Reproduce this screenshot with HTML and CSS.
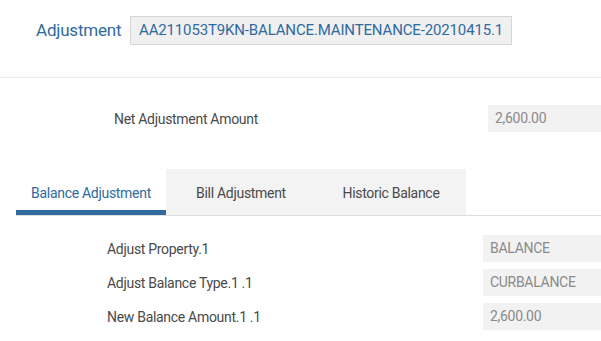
FILE: index.html
```html
<!DOCTYPE html>
<html lang="en">

<head>
    <meta charset="UTF-8">
    <meta name="viewport" content="width=device-width, initial-scale=1.0">
    <title>Adjustment</title>
    <link rel="stylesheet" href="styles.css">
</head>

<body>
    <div class="header">
        <span class="header-label">Adjustment</span>
        <span class="header-id">AA211053T9KN-BALANCE.MAINTENANCE-20210415.1</span>
    </div>

    <div class="net-row">
        <span class="net-label">Net Adjustment Amount</span>
        <span class="value-box net-value">2,600.00</span>
    </div>

    <div class="tabs">
        <div class="tab active">Balance Adjustment</div>
        <div class="tab">Bill Adjustment</div>
        <div class="tab">Historic Balance</div>
    </div>

    <div class="fields">
        <div class="field-row">
            <span class="field-label">Adjust Property.1</span>
            <span class="value-box">BALANCE</span>
        </div>
        <div class="field-row">
            <span class="field-label">Adjust Balance Type.1 .1</span>
            <span class="value-box">CURBALANCE</span>
        </div>
        <div class="field-row">
            <span class="field-label">New Balance Amount.1 .1</span>
            <span class="value-box">2,600.00</span>
        </div>
    </div>
</body>

</html>
```

FILE: styles.css
```css
body {
    font-family: Roboto, "Liberation Sans", sans-serif;
    margin: 0;
    background: #fff;
    color: #555;
    letter-spacing: -0.3px;
    overflow: hidden;
}

.header {
    display: flex;
    align-items: flex-start;
    height: 78px;
    padding: 16px 0 0 36px;
    box-sizing: border-box;
    border-bottom: 1px solid #ececec;
}

.header-label {
    font-size: 17px;
    line-height: 29px;
    letter-spacing: -0.2px;
    color: #2f6aa0;
    width: 94px;
}

.header-id {
    font-size: 15px;
    letter-spacing: -0.15px;
    color: #2f6aa0;
    background-color: #f0f0f0;
    border: 1px solid #d6d6d6;
    height: 29px;
    line-height: 27px;
    box-sizing: border-box;
    padding: 0 8px;
}

.net-row {
    display: flex;
    align-items: center;
    margin-top: 27px;
    padding-left: 114px;
}

.net-label {
    font-size: 14px;
    width: 374px;
    color: #4a4a4a;
}

.value-box {
    display: block;
    flex: 1;
    height: 27px;
    line-height: 27px;
    font-size: 14px;
    color: #8a8a8a;
    background-color: #f2f2f2;
    padding-left: 7px;
}

.tabs {
    display: flex;
    margin: 37px 0 0 16px;
    border-bottom: 1px solid #ddd;
}

.tab {
    width: 150px;
    height: 46px;
    box-sizing: border-box;
    padding-top: 16px;
    line-height: 16px;
    font-size: 14px;
    text-align: center;
    color: #4a4a4a;
    background-color: #f3f3f3;
}

.tab.active {
    background-color: #fff;
    color: #2f6aa0;
    border-bottom: 5px solid #2f6aa0;
}

.fields {
    padding-top: 19px;
}

.field-row {
    display: flex;
    align-items: center;
    padding-left: 107px;
    margin-bottom: 7px;
}

.field-label {
    font-size: 14px;
    width: 376px;
    color: #4a4a4a;
}
```
